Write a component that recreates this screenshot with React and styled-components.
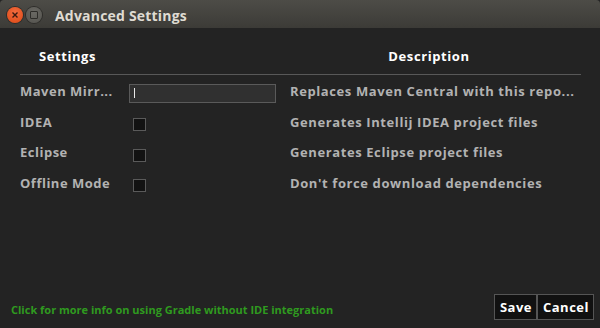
import React from "react";
import styled, { createGlobalStyle } from "styled-components";

const GlobalStyle = createGlobalStyle`
  html, body {
    margin: 0;
    padding: 0;
    background: #232323;
  }
  body {
    font-family: "Open Sans", "DejaVu Sans", sans-serif;
  }
`;

const settings = [
  {
    label: "Maven Mirr...",
    control: "text",
    description: "Replaces Maven Central with this repo...",
  },
  { label: "IDEA", control: "check", description: "Generates Intellij IDEA project files" },
  { label: "Eclipse", control: "check", description: "Generates Eclipse project files" },
  { label: "Offline Mode", control: "check", description: "Don't force download dependencies" },
];

function App() {
  return (
    <>
      <GlobalStyle />
      <Window>
        <TitleBar>
          <WindowButtons>
            <CloseButton>
              <svg width="8" height="8" viewBox="0 0 8 8">
                <path d="M1.5 1.5 L6.5 6.5 M6.5 1.5 L1.5 6.5" stroke="#3a1a10" strokeWidth="1.4" />
              </svg>
            </CloseButton>
            <MaxButton>
              <span />
            </MaxButton>
          </WindowButtons>
          <Title>Advanced Settings</Title>
        </TitleBar>

        <Body>
          <HeaderRow>
            <HeaderCell>Settings</HeaderCell>
            <HeaderCell className="desc">Description</HeaderCell>
          </HeaderRow>
          <Rows>
            {settings.map((s) => (
              <Row key={s.label}>
                <Label>{s.label}</Label>
                <Control>
                  {s.control === "text" ? (
                    <TextField>
                      <Caret />
                    </TextField>
                  ) : (
                    <CheckBox />
                  )}
                </Control>
                <Description>{s.description}</Description>
              </Row>
            ))}
          </Rows>
        </Body>

        <Footer>
          <InfoLink>Click for more info on using Gradle without IDE integration</InfoLink>
          <Buttons>
            <Button>Save</Button>
            <Button>Cancel</Button>
          </Buttons>
        </Footer>
      </Window>
    </>
  );
}

const Window = styled.div`
  width: 600px;
  height: 328px;
  display: flex;
  flex-direction: column;
  background-color: #232323;
  overflow: hidden;
`;

const TitleBar = styled.div`
  height: 28px;
  display: flex;
  align-items: center;
  padding: 0 0 0 7px;
  background: linear-gradient(#4d4c47, #3c3b37);
  border-top-left-radius: 4px;
  border-top-right-radius: 4px;
  gap: 13px;
`;

const WindowButtons = styled.div`
  display: flex;
  align-items: center;
  gap: 3px;
  margin-top: 2px;
`;

const CloseButton = styled.div`
  width: 16px;
  height: 16px;
  border-radius: 50%;
  background: radial-gradient(circle at 50% 35%, #f36c3f, #dd4814);
  display: flex;
  align-items: center;
  justify-content: center;
  box-shadow: 0 0 0 1px #2e2d2a;
`;

const MaxButton = styled.div`
  width: 16px;
  height: 16px;
  border-radius: 50%;
  background: radial-gradient(circle at 50% 35%, #6a6964, #53524d);
  display: flex;
  align-items: center;
  justify-content: center;
  box-shadow: 0 0 0 1px #2e2d2a;

  span {
    width: 6px;
    height: 6px;
    border: 1.5px solid #2d2c29;
    border-radius: 1px;
  }
`;

const Title = styled.div`
  font-weight: 700;
  font-size: 14px;
  letter-spacing: 0.2px;
  color: #dfdbd2;
  margin-top: 2px;
`;

const Body = styled.div`
  flex: 1;
  padding: 0 19px 0 20px;
  display: flex;
  flex-direction: column;
`;

const HeaderRow = styled.div`
  display: grid;
  grid-template-columns: 95px 1fr 296px;
  height: 36px;
  padding-top: 10px;
  align-items: center;
  border-bottom: 1px solid #585858;
`;

const HeaderCell = styled.div`
  font-weight: 700;
  font-size: 13px;
  letter-spacing: 0.6px;
  color: #ffffff;
  text-align: center;
  &.desc {
    grid-column: 3;
    padding-right: 8px;
  }
`;

const Rows = styled.div`
  display: flex;
  flex-direction: column;
  padding-top: 1px;
`;

const Row = styled.div`
  display: grid;
  grid-template-columns: 109px 161px 1fr;
  height: 30.5px;
  align-items: center;
`;

const Label = styled.div`
  font-weight: 700;
  font-size: 13px;
  letter-spacing: 0.5px;
  color: #b2b2b2;
  white-space: nowrap;
  overflow: hidden;
`;

const Control = styled.div`
  display: flex;
  align-items: center;
`;

const TextField = styled.div`
  width: 141px;
  height: 17px;
  background-color: #303030;
  border: 1px solid #5a5a5a;
  display: flex;
  align-items: center;
  padding-left: 4px;
  margin-top: 4px;
  box-sizing: content-box;
`;

const Caret = styled.span`
  width: 1px;
  height: 10px;
  background: #e8e8e8;
`;

const CheckBox = styled.div`
  width: 11px;
  height: 11px;
  margin-left: 4px;
  margin-top: 6px;
  background-color: #121212;
  border: 1px solid #5a5a5a;
`;

const Description = styled.div`
  font-weight: 700;
  font-size: 13px;
  letter-spacing: 0.6px;
  color: #b2b2b2;
  white-space: nowrap;
  overflow: hidden;
`;

const Footer = styled.div`
  display: flex;
  align-items: center;
  justify-content: space-between;
  padding: 0 6px 6px 11px;
  height: 31px;
`;

const InfoLink = styled.div`
  font-weight: 700;
  font-size: 11px;
  color: #2f9a1f;
  cursor: pointer;
  margin-top: 6px;
`;

const Buttons = styled.div`
  display: flex;
  gap: 0;
`;

const Button = styled.button`
  font-family: inherit;
  font-weight: 700;
  font-size: 13px;
  letter-spacing: 0.5px;
  color: #ffffff;
  background-color: #111111;
  border: 1px solid #555555;
  height: 26px;
  padding: 0 4px 0 5px;
  margin: 0;
  cursor: pointer;
`;

export default App;
